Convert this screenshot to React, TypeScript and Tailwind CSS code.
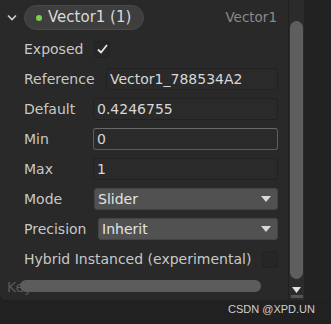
import React from "react";

const font = { fontFamily: '"DejaVu Sans", Verdana, sans-serif' };

function Row({ label, children }: { label: string; children?: React.ReactNode }) {
  return (
    <div className="flex h-[30px] items-center pl-6 pr-[10px]">
      <span className="w-[70px] shrink-0 text-[14px] text-[#c8c8c8]">{label}</span>
      {children}
    </div>
  );
}

function Field({ value, offset = 0, hover = false }: { value: string; offset?: number; hover?: boolean }) {
  return (
    <div
      className={
        "flex h-[22px] flex-1 items-center rounded-[3px] border bg-[#2a2a2a] px-[3px] text-[14px] text-[#d8d8d8] " +
        (hover ? "border-[#5c5c5c] border-t-[#6a6a6a]" : "border-[#212121]")
      }
      style={{ marginLeft: offset }}
    >
      {value}
    </div>
  );
}

function Select({ value, offset = 0 }: { value: string; offset?: number }) {
  return (
    <div
      className="flex h-[22px] flex-1 items-center justify-between rounded-[3px] border border-[#444] bg-[#515151] pl-[3px] pr-[6px] text-[14px] text-[#e4e4e4]"
      style={{ marginLeft: offset }}
    >
      <span>{value}</span>
      <svg width="10" height="6" viewBox="0 0 10 6">
        <path d="M0 0h10L5 6z" fill="#d8d8d8" />
      </svg>
    </div>
  );
}

function Check({ checked }: { checked?: boolean }) {
  return (
    <div className="flex h-[17px] w-[16px] items-center justify-center rounded-[3px] border border-[#222] bg-[#262626]">
      {checked && (
        <svg width="11" height="10" viewBox="0 0 11 10">
          <path d="M1 5.5l3 3L10 1" fill="none" stroke="#e6e6e6" strokeWidth="1.8" />
        </svg>
      )}
    </div>
  );
}

export default function App() {
  return (
    <div className="flex h-[324px] w-[331px] flex-col bg-[#212121]" style={font}>
      <div className="flex h-[300px]">
        <div className="relative flex w-[304px] rounded-bl-[6px] bg-[#292929]">
          <div className="flex w-[288px] flex-col">
            <div className="flex h-[34px] items-center pt-[1px]">
              <svg className="ml-[7px] mr-[7px]" width="10" height="7" viewBox="0 0 10 7">
                <path d="M1 1.5l4 4 4-4" fill="none" stroke="#d0d0d0" strokeWidth="1.6" />
              </svg>
              <div className="flex h-[25px] w-[120px] items-center rounded-full border border-[#4a4a4a] bg-[#3e3e3e] pl-[11px]">
                <span className="h-[6px] w-[6px] rounded-full bg-[#7ad150]" />
                <span className="ml-[6px] text-[15px] text-[#d8d8d8]">Vector1 (1)</span>
              </div>
              <span className="ml-auto mr-[11px] text-[13.5px] text-[#8a8a8a]">Vector1</span>
            </div>
            <Row label="Exposed">
              <Check checked />
            </Row>
            <Row label="Reference">
              <Field value="Vector1_788534A2" offset={12} />
            </Row>
            <Row label="Default">
              <Field value="0.4246755" offset={-1} />
            </Row>
            <Row label="Min">
              <Field value="0" offset={-1} hover />
            </Row>
            <Row label="Max">
              <Field value="1" offset={-1} />
            </Row>
            <Row label="Mode">
              <Select value="Slider" />
            </Row>
            <Row label="Precision">
              <Select value="Inherit" offset={4} />
            </Row>
            <div className="flex h-[30px] items-center justify-between pl-6 pr-[10px]">
              <span className="text-[14px] text-[#c8c8c8]">Hybrid Instanced (experimental)</span>
              <Check />
            </div>
            <div className="relative mt-[3px] pl-[7px] text-[14px] text-[#5a5a5a]">
              Keywords
              <div className="absolute left-[20px] top-[3px] h-[12px] w-[241px] rounded-full bg-[#5c5c5c]" />
            </div>
          </div>
          <div className="flex w-[16px] flex-col items-center border-l border-[#202020] bg-[#2b2b2b]">
            <div className="mt-[21px] h-[258px] w-[13px] rounded-full bg-[#5e5e5e]" />
            <svg className="mt-[8px]" width="9" height="6" viewBox="0 0 9 6">
              <path d="M0 0h9L4.5 6z" fill="#e0e0e0" />
            </svg>
            <div className="mt-[2px] h-[3px] w-[12px] bg-[#555]" />
          </div>
        </div>
        <div className="flex-1 bg-[#222222]" />
      </div>
      <div className="flex flex-1 justify-end pr-[16px] pt-[1px]">
        <span className="text-[11px] text-[#cfcfcf]" style={{ fontFamily: '"Liberation Sans", Arial, sans-serif' }}>
          CSDN @XPD.UN
        </span>
      </div>
    </div>
  );
}
